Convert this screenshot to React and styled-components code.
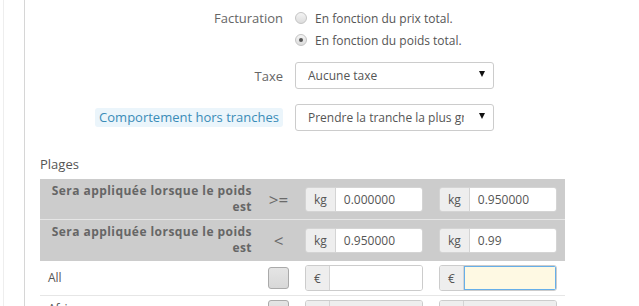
import React from "react";
import styled, { createGlobalStyle } from "styled-components";

const Global = createGlobalStyle`
  html, body { margin: 0; padding: 0; background: #fff; }
  body { font-family: "Open Sans", "Liberation Sans", sans-serif; font-size: 12px; color: #555; }
  * { box-sizing: border-box; }
`;

const Page = styled.div`
  width: 639px;
  height: 306px;
  overflow: hidden;
  padding-left: 3px;
`;

const OuterPanel = styled.div`
  border-left: 1px solid #eeeeee;
  padding-left: 20px;
  height: 100%;
`;

const InnerPanel = styled.div`
  border-left: 1px solid #d6d6d6;
  padding-left: 15px;
  padding-top: 7px;
  height: 100%;
`;

const FormGroup = styled.div`
  display: grid;
  grid-template-columns: 243px 200px;
  column-gap: 12px;
  align-items: ${(p) => (p.$top ? "start" : "center")};
  margin-bottom: ${(p) => p.$mb}px;
`;

const Label = styled.div`
  justify-self: end;
  font-size: 13px;
  color: #666;
  line-height: 22px;
`;

const TipLabel = styled.span`
  justify-self: end;
  font-size: 13px;
  color: #3a8cb8;
  background: #ebf5fb;
  border-radius: 3px;
  padding: 0 4px;
  line-height: 19px;
`;

const RadioList = styled.div`
  display: flex;
  flex-direction: column;
`;

const RadioLine = styled.label`
  display: flex;
  align-items: center;
  gap: 8px;
  height: 22px;
  font-size: 12px;
  color: #555;
  white-space: nowrap;
`;

const RadioDot = styled.span`
  width: 12px;
  height: 12px;
  border-radius: 50%;
  border: 1px solid #c4c4c4;
  background: linear-gradient(#f4f4f4, #dcdcdc);
  display: flex;
  align-items: center;
  justify-content: center;
  &::after {
    content: "";
    width: 4px;
    height: 4px;
    border-radius: 50%;
    background: ${(p) => (p.$checked ? "#555" : "transparent")};
  }
`;

const Select = styled.div`
  width: 199px;
  height: ${(p) => p.$h}px;
  border: 1px solid #ccc;
  border-radius: 3px;
  background: #fff;
  display: flex;
  align-items: center;
  padding: 0 6px 0 12px;
  font-size: 12px;
  color: #555;
  white-space: nowrap;
`;

const SelectText = styled.span`
  flex: 1;
  overflow: hidden;
  width: 0;
`;

const Arrow = styled.span`
  width: 0;
  height: 0;
  border-left: 3px solid transparent;
  border-right: 3px solid transparent;
  border-top: 6px solid #111;
  margin-left: 15px;
  margin-right: 2px;
  margin-top: -3px;
`;

const SectionTitle = styled.div`
  font-size: 13px;
  color: #555;
  line-height: 18px;
  margin-top: 24px;
  margin-bottom: 6px;
`;

const Table = styled.div`
  width: 525px;
  display: grid;
  grid-template-columns: 220px 37px 134px 134px;
`;

const Row = styled.div`
  display: contents;
`;

const Cell = styled.div`
  height: ${(p) => p.$h}px;
  background: ${(p) => p.$bg || "transparent"};
  border-bottom: 1px solid ${(p) => p.$line || "transparent"};
  display: flex;
  align-items: ${(p) => (p.$top ? "flex-start" : "center")};
  padding: ${(p) => (p.$top ? "4px 8px 0" : "0 8px")};
`;

const HeadLabel = styled.div`
  text-align: right;
  font-weight: bold;
  color: #666;
  font-size: 12px;
  letter-spacing: 0.45px;
  line-height: 16px;
  width: 100%;
  white-space: nowrap;
`;

const Operator = styled.span`
  font-size: 17px;
  color: #6a6a6a;
  width: 100%;
  text-align: center;
`;

const ZoneName = styled.span`
  font-size: 12px;
  color: #555;
  line-height: 18px;
`;

const Group = styled.div`
  display: flex;
  width: 118px;
  height: ${(p) => p.$h}px;
  border: 1px solid ${(p) => (p.$plain ? "#d4d4d4" : "#ccc")};
  border-radius: 3px;
  overflow: hidden;
`;

const Addon = styled.span`
  background: #eeeeee;
  border-right: 1px solid #d4d4d4;
  padding: 0 8px;
  display: flex;
  align-items: center;
  color: #555;
  font-size: 12px;
`;

const Input = styled.span`
  flex: 1;
  display: flex;
  align-items: center;
  padding-left: 8px;
  font-size: 12px;
  color: #555;
  background: ${(p) => (p.$focus ? "#fef9e3" : p.$disabled ? "#eeeeee" : "#fff")};
  ${(p) => p.$focus && "box-shadow: inset 0 0 0 1px #66afe9;"}
`;

const CheckButton = styled.span`
  width: 22px;
  height: 22px;
  border: 1px solid #aaa;
  border-radius: 3px;
  background: linear-gradient(#e4e4e4, #d8d8d8);
  margin: 0 auto;
`;

const headRows = [
  { op: ">=", a: "0.000000", b: "0.950000" },
  { op: "<", a: "0.950000", b: "0.99" },
];

export default function App() {
  return (
    <Page>
      <Global />
      <OuterPanel>
        <InnerPanel>
          <FormGroup $top $mb={11}>
            <Label>Facturation</Label>
            <RadioList>
              <RadioLine>
                <RadioDot />
                En fonction du prix total.
              </RadioLine>
              <RadioLine>
                <RadioDot $checked />
                En fonction du poids total.
              </RadioLine>
            </RadioList>
          </FormGroup>
          <FormGroup $mb={15}>
            <Label>Taxe</Label>
            <Select $h={27}>
              <SelectText>Aucune taxe</SelectText>
              <Arrow />
            </Select>
          </FormGroup>
          <FormGroup $mb={0}>
            <TipLabel>Comportement hors tranches</TipLabel>
            <Select $h={27}>
              <SelectText>Prendre la tranche la plus grande</SelectText>
              <Arrow />
            </Select>
          </FormGroup>
          <SectionTitle>Plages</SectionTitle>
          <Table>
            {headRows.map((r, i) => (
              <Row key={i}>
                <Cell $h={41} $bg="#cccccc" $line={i === 0 ? "#e6e6e6" : "#cccccc"}>
                  <HeadLabel>
                    Sera appliquée lorsque le poids
                    <br />
                    est
                  </HeadLabel>
                </Cell>
                <Cell $h={41} $bg="#cccccc" $line={i === 0 ? "#e6e6e6" : "#cccccc"}>
                  <Operator>{r.op}</Operator>
                </Cell>
                <Cell $h={41} $bg="#cccccc" $line={i === 0 ? "#e6e6e6" : "#cccccc"}>
                  <Group $h={25} $plain>
                    <Addon>kg</Addon>
                    <Input>{r.a}</Input>
                  </Group>
                </Cell>
                <Cell $h={41} $bg="#cccccc" $line={i === 0 ? "#e6e6e6" : "#cccccc"}>
                  <Group $h={25} $plain>
                    <Addon>kg</Addon>
                    <Input>{r.b}</Input>
                  </Group>
                </Cell>
              </Row>
            ))}
            <Row>
              <Cell $h={35} $line="#e6e6e6">
                <ZoneName>All</ZoneName>
              </Cell>
              <Cell $h={35} $line="#e6e6e6">
                <CheckButton />
              </Cell>
              <Cell $h={35} $line="#e6e6e6">
                <Group $h={26}>
                  <Addon>€</Addon>
                  <Input />
                </Group>
              </Cell>
              <Cell $h={35} $line="#e6e6e6">
                <Group $h={26}>
                  <Addon>€</Addon>
                  <Input $focus />
                </Group>
              </Cell>
            </Row>
            <Row>
              <Cell $h={35} $top>
                <ZoneName>Afrique</ZoneName>
              </Cell>
              <Cell $h={35} $top>
                <CheckButton />
              </Cell>
              <Cell $h={35} $top>
                <Group $h={26}>
                  <Addon>€</Addon>
                  <Input $disabled />
                </Group>
              </Cell>
              <Cell $h={35} $top>
                <Group $h={26}>
                  <Addon>€</Addon>
                  <Input $disabled />
                </Group>
              </Cell>
            </Row>
          </Table>
        </InnerPanel>
      </OuterPanel>
    </Page>
  );
}
